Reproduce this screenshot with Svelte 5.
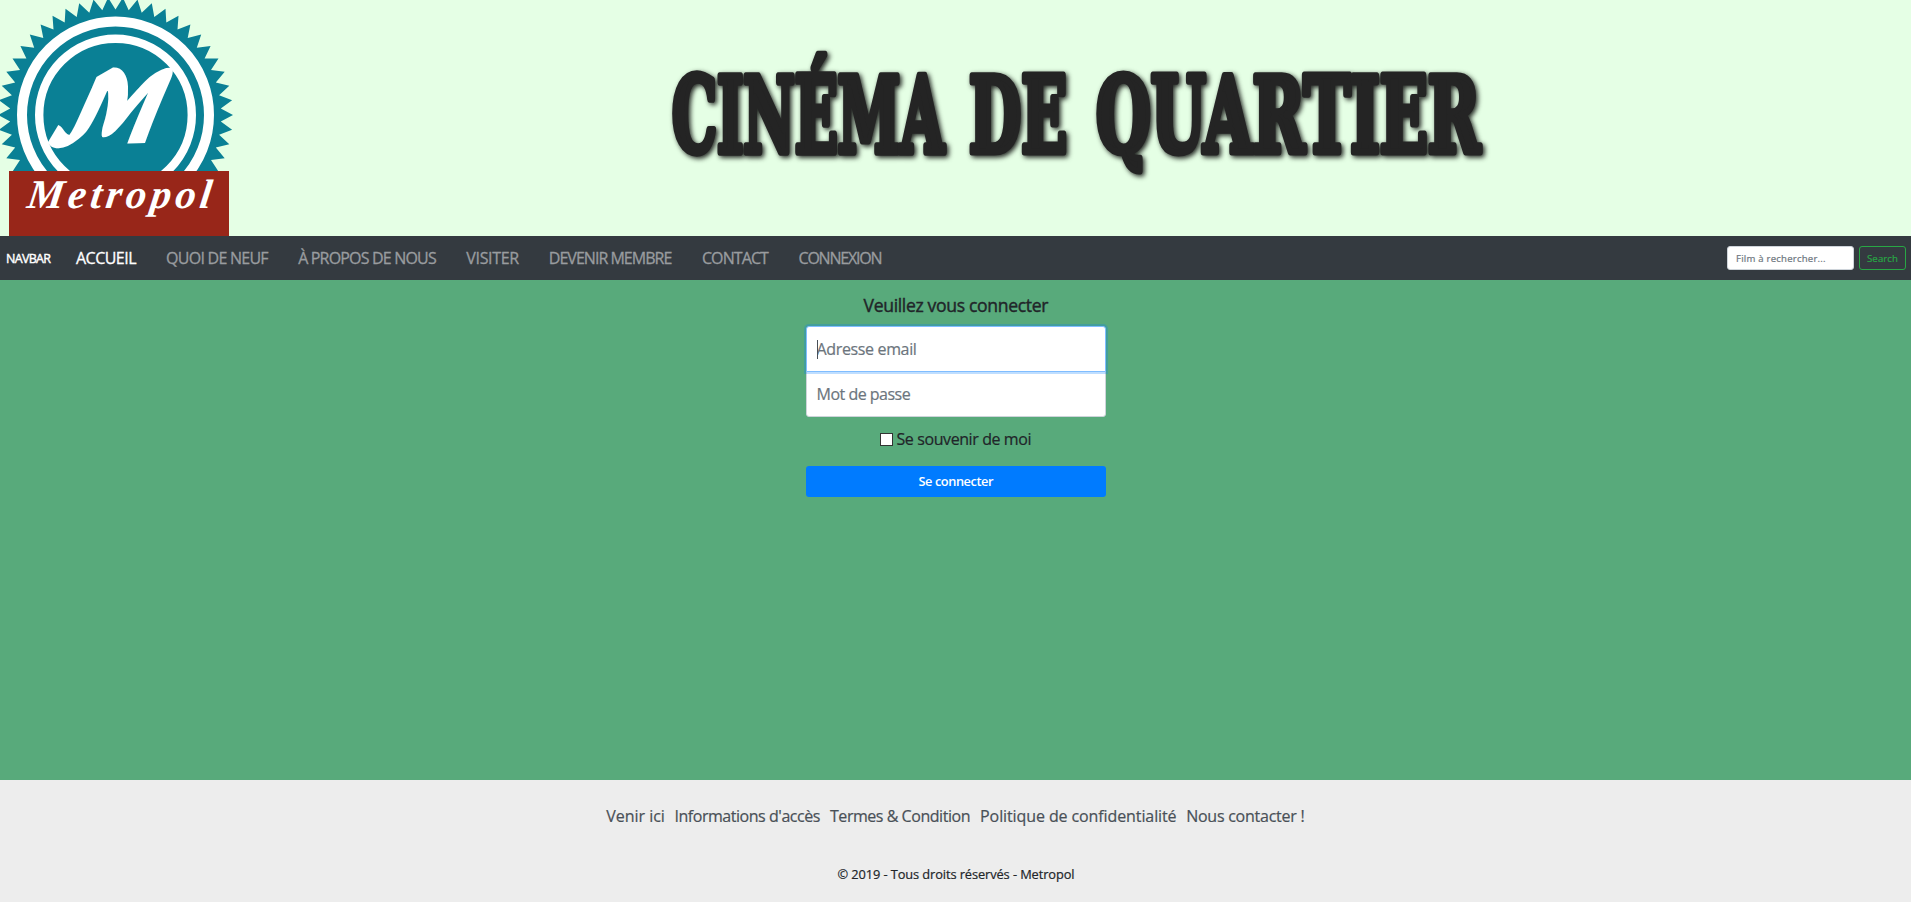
<script>
  const nav = [
    ['ACCUEIL', 60.5],
    ['QUOI DE NEUF', 102.5],
    ['À PROPOS DE NOUS', 138.5],
    ['VISITER', 53],
    ['DEVENIR MEMBRE', 123.5],
    ['CONTACT', 67],
    ['CONNEXION', 84]
  ];
  const footerLinks = [
    ['Venir ici', 58.5],
    ["Informations d'accès", 146],
    ['Termes & Condition', 140.5],
    ['Politique de confidentialité', 196.5],
    ['Nous contacter !', 118.5]
  ];
  const titleWords = [
    { text: 'CINÉMA', x: 672, width: 272 },
    { text: 'DE', x: 969, width: 98 },
    { text: 'QUARTIER', x: 1096, width: 384 }
  ];

  // Jagged edge of the badge: alternating outer and inner radii.
  const teeth = 50;
  const seal = Array.from({ length: teeth * 2 }, (_, i) => {
    const r = i % 2 ? 105.5 : 117.5;
    const a = (i * Math.PI) / teeth;
    return `${(115.5 + r * Math.cos(a)).toFixed(1)},${(115 + r * Math.sin(a)).toFixed(1)}`;
  }).join(' ');

  // Tracks a line of text so that it occupies the given width.
  function fit(node, width) {
    const natural = node.getBoundingClientRect().width;
    const gap = (width - natural) / (node.textContent.trim().length - 1);
    node.style.letterSpacing = `${gap}px`;
    node.style.marginRight = `${-gap}px`;
  }

  // Condenses a title word to its width, keeping its height.
  function condense(node, { x, width }) {
    const scale = width / node.getComputedTextLength();
    node.setAttribute('transform', `translate(${x} 152) scale(${scale} 1)`);
  }
</script>

<header>
  <svg class="logo" width="240" height="236" viewBox="0 0 240 236">
    <polygon points={seal} fill="#0a8095" />
    <g fill="none" stroke="#fff">
      <circle cx="115.5" cy="115" r="93.5" stroke-width="10" />
      <circle cx="115.5" cy="115" r="76.3" stroke-width="8.4" />
    </g>
    <text class="initial" transform="translate(42 142) skewX(-12)" font-size="93" textLength="122" lengthAdjust="spacingAndGlyphs">𝓜</text>
    <rect x="0" y="171" width="240" height="65" fill="#e5ffe5" />
    <rect x="9" y="171" width="220" height="65" fill="#982619" />
    <text class="script" transform="translate(26 208) skewX(-8)" font-size="41" textLength="184" lengthAdjust="spacing">Metropol</text>
  </svg>
  <svg class="title" width="860" height="160" viewBox="650 20 860 160">
    {#each titleWords as word}
      <text use:condense={word}>{word.text}</text>
    {/each}
  </svg>
</header>

<nav>
  <span class="brand"><span use:fit={45}>NAVBAR</span></span>
  <div class="links">
    {#each nav as [label, width], i}
      <span class="link" class:active={i === 0}><span use:fit={width}>{label}</span></span>
    {/each}
  </div>
  <input class="search" type="text" placeholder="Film à rechercher..." />
  <button class="go"><span use:fit={31}>Search</span></button>
</nav>

<main>
  <h1><span use:fit={185}>Veuillez vous connecter</span></h1>
  <form>
    <div class="email">
      <input type="text" placeholder="Adresse email" />
      <i class="caret"></i>
    </div>
    <input class="password" type="password" placeholder="Mot de passe" />
    <div class="remember">
      <i class="box"></i>
      <span use:fit={135}>Se souvenir de moi</span>
    </div>
    <button type="button" class="submit"><span use:fit={75}>Se connecter</span></button>
  </form>
</main>

<footer>
  <div class="foot-links">
    {#each footerLinks as [label, width]}
      <span><span use:fit={width}>{label}</span></span>
    {/each}
  </div>
  <p><span use:fit={237}>© 2019 - Tous droits réservés - Metropol</span></p>
</footer>

<style>
  :global(body) {
    margin: 0;
    background: #58aa7b;
    font-family: 'Trebuchet MS', 'Open Sans', sans-serif;
    font-size: 16px;
    color: #212529;
  }
  span {
    white-space: nowrap;
  }
  nav span,
  h1 span,
  .remember span,
  .submit span,
  footer span {
    display: inline-block;
  }
  input,
  button {
    box-sizing: border-box;
    font-family: inherit;
    margin: 0;
  }
  header {
    display: flex;
    align-items: flex-start;
    height: 236px;
    background: #e5ffe5;
  }
  .logo {
    display: block;
    flex: none;
  }
  .script {
    font-family: 'Liberation Serif', serif;
    font-style: italic;
    font-weight: bold;
    fill: #fff;
  }
  .initial {
    font-family: 'DejaVu Math TeX Gyre', 'DejaVu Serif', serif;
    fill: #fff;
    stroke: #fff;
    stroke-width: 2px;
  }
  .title {
    display: block;
    flex: none;
    margin: 20px 0 0 410px;
    overflow: visible;
    filter: drop-shadow(2px 2px 2.5px rgba(0, 0, 0, 0.85));
  }
  .title text {
    font-family: 'DejaVu Serif Condensed', 'DejaVu Serif', serif;
    font-weight: bold;
    font-size: 105px;
    fill: #242424;
    stroke: #242424;
    stroke-width: 6px;
    stroke-linejoin: round;
    vector-effect: non-scaling-stroke;
  }
  nav {
    display: flex;
    align-items: center;
    height: 44px;
    box-sizing: border-box;
    padding: 0 5px 0 6px;
    background: #343a40;
  }
  .brand {
    width: 70px;
    font-size: 12.5px;
    -webkit-text-stroke: 0.4px currentColor;
    color: #fff;
  }
  .links {
    display: flex;
    flex: 1;
    gap: 29.6px;
    color: #999c9f;
    -webkit-text-stroke: 0.3px currentColor;
  }
  .active {
    color: #fff;
  }
  .search {
    width: 127px;
    height: 24px;
    padding: 0 8px;
    border: 1px solid #ced4da;
    border-radius: 3px;
    background: #fff;
    font-size: 9.6px;
    letter-spacing: 0.22px;
  }
  input::placeholder {
    color: #6c757d;
    opacity: 1;
    -webkit-text-stroke: 0.2px currentColor;
  }
  .go {
    width: 47px;
    height: 24px;
    margin-left: 5px;
    padding: 0;
    border: 1px solid #28a745;
    border-radius: 3px;
    background: transparent;
    color: #28a745;
    font-size: 9.6px;
    -webkit-text-stroke: 0.2px currentColor;
  }
  main {
    display: flex;
    flex-direction: column;
    align-items: center;
    height: 500px;
  }
  h1 {
    margin: 13px 0 9px;
    padding-left: 1px;
    font-size: 17.6px;
    line-height: 24px;
    font-weight: 400;
    -webkit-text-stroke: 0.4px currentColor;
  }
  form {
    display: flex;
    flex-direction: column;
    width: 300px;
  }
  .email {
    position: relative;
    z-index: 1;
    height: 46px;
    margin-bottom: -1px;
  }
  form input {
    width: 300px;
    height: 46px;
    padding: 0 10px;
    border: 1px solid #ced4da;
    border-radius: 0 0 3px 3px;
    background: #fff;
    font-size: 16px;
    letter-spacing: -0.35px;
    display: block;
  }
  .email input {
    border-color: #80bdff;
    border-radius: 3px 3px 0 0;
    box-shadow: 0 0 0 2px rgba(0, 123, 255, 0.25);
    outline: none;
  }
  .password {
    letter-spacing: -0.5px;
  }
  .caret {
    position: absolute;
    left: 11px;
    top: 14px;
    width: 1px;
    height: 19px;
    background: #495057;
  }
  .remember {
    display: flex;
    justify-content: center;
    align-items: center;
    gap: 4px;
    height: 24px;
    margin: 10px 0 15px;
  }
  .box {
    width: 11px;
    height: 11px;
    border: 1px solid #333;
    background: #fff;
  }
  .remember span,
  .foot-links,
  p {
    -webkit-text-stroke: 0.2px currentColor;
  }
  .submit {
    height: 31px;
    padding: 0 0 0 1px;
    border: 0;
    border-radius: 3px;
    background: #007bff;
    color: #fff;
    font-size: 12.8px;
    line-height: 29px;
    font-weight: 600;
  }
  footer {
    height: 122px;
    overflow: hidden;
    background: #ededed;
    text-align: center;
  }
  .foot-links {
    display: flex;
    justify-content: center;
    gap: 9.6px;
    margin-top: 24px;
    line-height: 24px;
    color: #495057;
  }
  p {
    margin: 36px 0 0;
    padding-left: 1px;
    font-size: 12.8px;
    line-height: 20px;
  }
</style>
